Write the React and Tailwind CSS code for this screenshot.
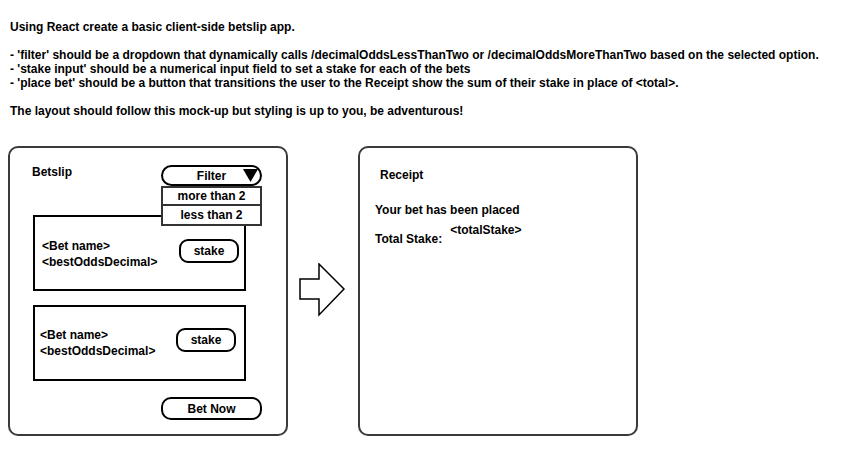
import { useState } from "react";

const font = { fontFamily: '"Liberation Sans", Arial, sans-serif' };

const BetCard = ({ pl, pr, textOffset, stakeOffset }) => (
  <div
    className={`w-[213px] h-[76px] border-2 border-black flex items-center justify-between ${pl} ${pr}`}
  >
    <div className={`flex flex-col leading-[16px] ${textOffset}`}>
      <span>&lt;Bet name&gt;</span>
      <span>&lt;bestOddsDecimal&gt;</span>
    </div>
    <button
      className={`w-[60px] h-[24px] border-2 border-black rounded-[9px] flex items-center justify-center ${stakeOffset}`}
    >
      stake
    </button>
  </div>
);

const App = () => {
  const [filter, setFilter] = useState(null);

  return (
    <div className="w-[848px] h-[455px] bg-white text-black font-bold text-[12px] overflow-hidden" style={font}>
      {/* Brief */}
      <div className="pt-[20px] pl-[10px] leading-[14px]">
        <p>Using React create a basic client-side betslip app.</p>
        <p className="mt-[14px]">
          - 'filter' should be a dropdown that dynamically calls /decimalOddsLessThanTwo or /decimalOddsMoreThanTwo based on the selected option.
        </p>
        <p>- 'stake input' should be a numerical input field to set a stake for each of the bets</p>
        <p>
          - 'place bet' should be a button that transitions the user to the Receipt show the sum of their stake in place of &lt;total&gt;.
        </p>
        <p className="mt-[14px]">The layout should follow this mock-up but styling is up to you, be adventurous!</p>
      </div>

      {/* Mock-up */}
      <div className="mt-[28px] ml-[8px] flex items-start">
        {/* Betslip */}
        <div className="w-[280px] h-[290px] border-2 border-[#3a3a3a] rounded-[10px] pt-[17px] pl-[23px] pr-[24px] flex flex-col">
          <div className="flex items-start justify-between h-[21px]">
            <span className="-ml-[1px] leading-[14px]">Betslip</span>
            <div className="relative w-[101px]">
              <button className="relative w-[101px] h-[21px] border-2 border-black rounded-[11px] flex items-center justify-center">
                <span>Filter</span>
                <svg width="15" height="13" viewBox="0 0 15 13" className="absolute left-[80px] top-[2px]">
                  <polygon points="0,0 15,0 7.5,13" fill="black" />
                </svg>
              </button>
              <div className="absolute left-0 top-[21px] w-[101px] bg-white z-10 flex flex-col">
                <button
                  onClick={() => setFilter("more")}
                  className="h-[20px] border-2 border-[#333] flex items-center justify-center"
                >
                  more than 2
                </button>
                <button
                  onClick={() => setFilter("less")}
                  className="h-[20px] border-2 border-t-0 border-[#333] flex items-center justify-center"
                >
                  less than 2
                </button>
              </div>
            </div>
          </div>

          <div className="mt-[29px]">
            <BetCard pl="pl-[7px]" pr="pr-[5px]" textOffset="mt-[1px]" stakeOffset="-mt-[4px]" />
          </div>
          <div className="mt-[14px]">
            <BetCard pl="pl-[5px]" pr="pr-[8px]" textOffset="mt-0" stakeOffset="-mt-[6px]" />
          </div>

          <div className="mt-[16px] flex justify-end">
            <button className="w-[101px] h-[23px] border-2 border-black rounded-[10px] flex items-center justify-center">
              Bet Now
            </button>
          </div>
        </div>

        {/* Arrow */}
        <svg width="48" height="56" viewBox="0 0 48 56" className="mt-[117px] ml-[11px]">
          <polygon
            points="1,16 20,16 20,1 45,26 20,52 20,36 1,36"
            fill="white"
            stroke="black"
            strokeWidth="1.5"
          />
        </svg>

        {/* Receipt */}
        <div className="ml-[11px] w-[280px] h-[290px] border-2 border-[#3a3a3a] rounded-[10px] pt-[20px] pl-[15px] flex flex-col leading-[14px]">
          <span className="pl-[5px]">Receipt</span>
          <span className="mt-[21px]">Your bet has been placed</span>
          <div className="mt-[6px] flex items-start">
            <span className="mt-[9px]">Total Stake:</span>
            <span className="ml-[8px]">&lt;totalStake&gt;</span>
          </div>
        </div>
      </div>
    </div>
  );
};

export default App;
